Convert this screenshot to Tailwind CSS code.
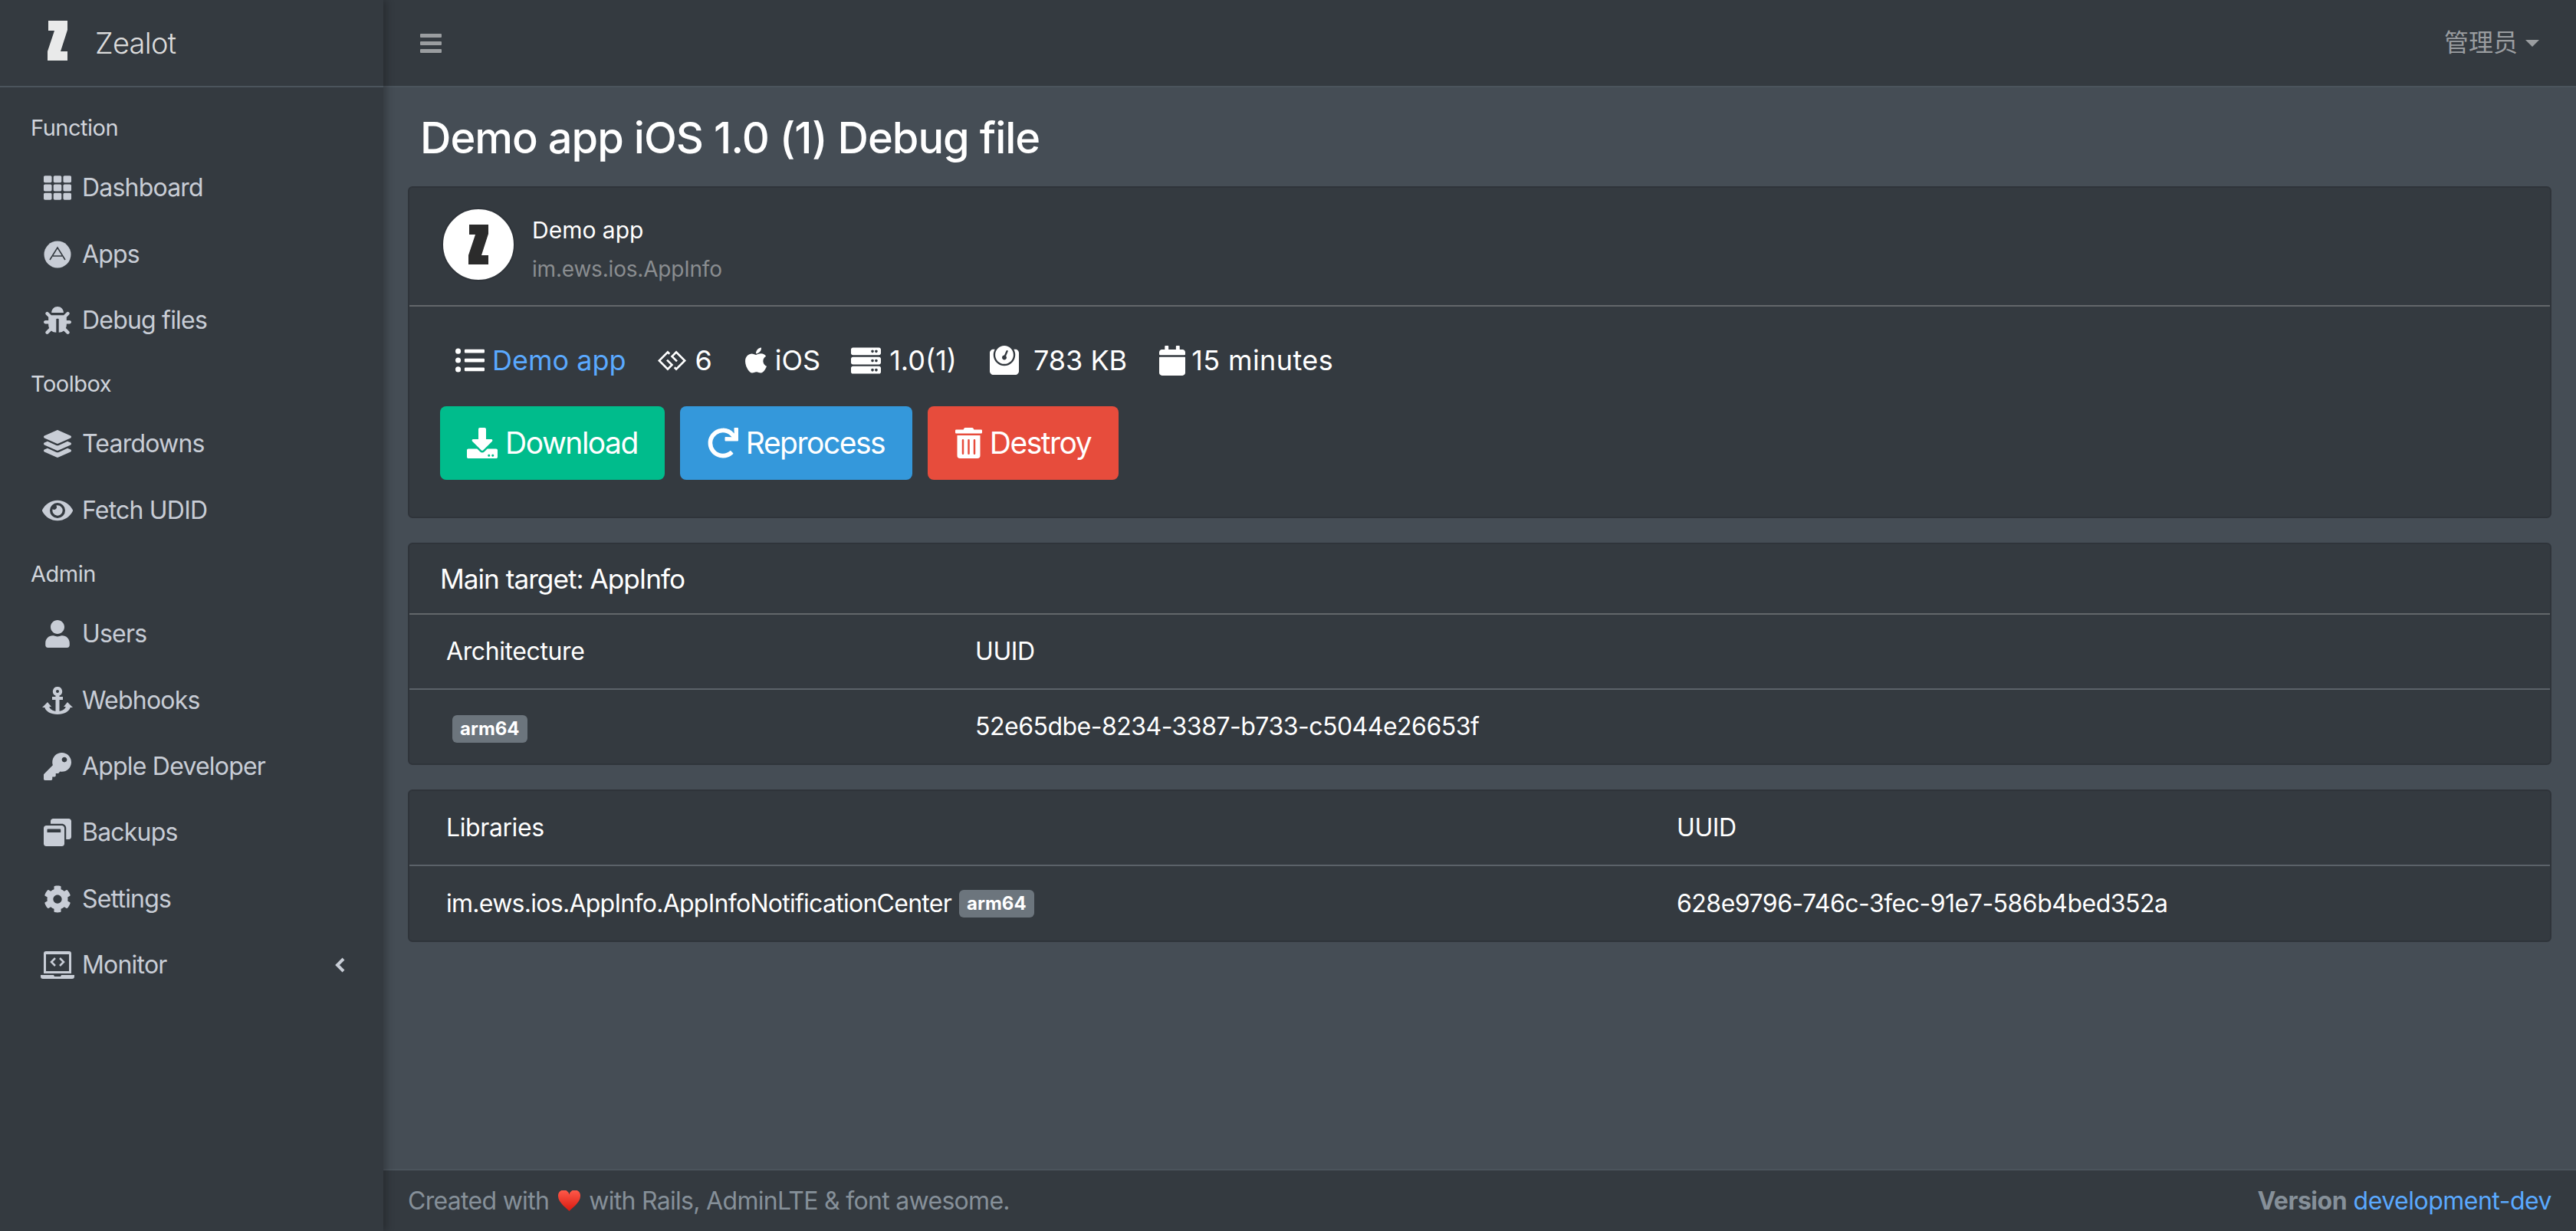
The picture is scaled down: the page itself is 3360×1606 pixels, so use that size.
<!DOCTYPE html>
<html lang="en">
<head>
    <meta charset="UTF-8">
    <title>Demo app iOS 1.0 (1) Debug file</title>
    <script src="https://cdn.jsdelivr.net/npm/@tailwindcss/browser@4"></script>
</head>
<body class="bg-[#454d55] font-['Inter','Noto_Sans_CJK_SC',sans-serif] text-[32px] tracking-[-0.6px] text-white h-[1606px] overflow-hidden flex">
    <!-- sidebar -->
    <aside class="w-[500px] shrink-0 bg-[#343a40] h-full flex flex-col text-[#c8cdd6] tracking-[-0.8px] shadow-[4px_0_10px_rgba(0,0,0,0.25)] z-10">
        <div class="h-[114px] shrink-0 border-b-2 border-[#4b545c] flex items-center pl-[62px] gap-[36px]">
            <svg class="w-[26px] h-[52px] -mt-[6px]" viewBox="0 0 26 52"><path fill="#e9eaea" d="M1 0h25v12l-9 28h9v12H0V40L9 13H1z"/></svg>
            <span class="text-[38px] tracking-[-0.7px] font-light text-[#dcdcdc] mt-[1px]">Zealot</span>
        </div>
        <nav class="flex flex-col pt-[13px]">
            <div class="h-[75px] pt-[5px] flex items-center pl-[40px] text-[29px] tracking-[-0.5px] text-[#d0d4db]">Function</div>
            <a class="h-[86.4px] flex items-center pl-[57px] gap-[14px]"><svg class="w-[36px] h-[36px] fill-current" viewBox="0 0 512 512"><path d="M149.333 56v80c0 13.255-10.745 24-24 24H24c-13.255 0-24-10.745-24-24V56c0-13.255 10.745-24 24-24h101.333c13.255 0 24 10.745 24 24zm181.334 240v-80c0-13.255-10.745-24-24-24H205.333c-13.255 0-24 10.745-24 24v80c0 13.255 10.745 24 24 24h101.333c13.255 0 24-10.745 24-24zm32-240v80c0 13.255 10.745 24 24 24H488c13.255 0 24-10.745 24-24V56c0-13.255-10.745-24-24-24H386.667c-13.255 0-24 10.745-24 24zm-32 80V56c0-13.255-10.745-24-24-24H205.333c-13.255 0-24 10.745-24 24v80c0 13.255 10.745 24 24 24h101.333c13.255 0 24-10.745 24-24zm-205.334 56H24c-13.255 0-24 10.745-24 24v80c0 13.255 10.745 24 24 24h101.333c13.255 0 24-10.745 24-24v-80c0-13.255-10.745-24-24-24zM0 376v80c0 13.255 10.745 24 24 24h101.333c13.255 0 24-10.745 24-24v-80c0-13.255-10.745-24-24-24H24c-13.255 0-24 10.745-24 24zm386.667-56H488c13.255 0 24-10.745 24-24v-80c0-13.255-10.745-24-24-24H386.667c-13.255 0-24 10.745-24 24v80c0 13.255 10.745 24 24 24zm0 160H488c13.255 0 24-10.745 24-24v-80c0-13.255-10.745-24-24-24H386.667c-13.255 0-24 10.745-24 24v80c0 13.255 10.745 24 24 24zM181.333 376v80c0 13.255 10.745 24 24 24h101.333c13.255 0 24-10.745 24-24v-80c0-13.255-10.745-24-24-24H205.333c-13.255 0-24 10.745-24 24z"/></svg>Dashboard</a>
            <a class="h-[86.4px] flex items-center pl-[57px] gap-[14px]"><svg class="w-[36px] h-[36px]" viewBox="0 0 36 36"><circle cx="18" cy="18" r="17.5" fill="currentColor"/><path d="M8 25 18 9l10 16M12 20h12" stroke="#343a40" stroke-width="1.6" fill="none"/></svg>Apps</a>
            <a class="h-[86.4px] flex items-center pl-[57px] gap-[14px]"><svg class="w-[36px] h-[36px] fill-current" viewBox="0 0 512 512"><path d="M511.988 288.9c-.478 17.43-15.217 31.1-32.653 31.1H424v16c0 21.864-4.882 42.584-13.6 61.145l60.228 60.228c12.496 12.497 12.496 32.758 0 45.255-12.498 12.497-32.759 12.496-45.256 0l-54.736-54.736C345.886 467.965 314.351 480 280 480V236c0-6.627-5.373-12-12-12h-24c-6.627 0-12 5.373-12 12v244c-34.351 0-65.886-12.035-90.636-32.108l-54.736 54.736c-12.498 12.497-32.759 12.496-45.256 0-12.496-12.497-12.496-32.758 0-45.255l60.228-60.228C92.882 378.584 88 357.864 88 336v-16H32.666C15.23 320 .491 306.33.013 288.9-.484 270.816 14.028 256 32 256h56v-58.745l-46.628-46.628c-12.496-12.497-12.496-32.758 0-45.255 12.498-12.497 32.758-12.497 45.256 0L141.255 160h229.489l54.627-54.627c12.498-12.497 32.758-12.497 45.256 0 12.496 12.497 12.496 32.758 0 45.255L424 197.255V256h56c17.972 0 32.484 14.816 31.988 32.9zM257 0c-61.856 0-112 50.144-112 112h224C369 50.144 318.856 0 257 0z"/></svg>Debug files</a>
            <div class="h-[75px] pt-[5px] flex items-center pl-[40px] text-[29px] tracking-[-0.5px] text-[#d0d4db]">Toolbox</div>
            <a class="h-[86.4px] flex items-center pl-[57px] gap-[14px]"><svg class="w-[36px] h-[36px] fill-current" viewBox="0 0 512 512"><path d="M12.41 148.020l232.940 105.670c6.800 3.090 14.490 3.090 21.290 0l232.940-105.670c16.550-7.510 16.550-32.520 0-40.030L266.650 2.310a25.607 25.607 0 0 0-21.290 0L12.410 107.980c-16.550 7.510-16.550 32.530 0 40.040zm487.180 88.280l-58.090-26.330-161.640 73.270c-7.560 3.430-15.590 5.170-23.860 5.170s-16.290-1.740-23.860-5.170L70.510 209.970l-58.100 26.330c-16.550 7.500-16.550 32.500 0 40l232.940 105.590c6.800 3.080 14.490 3.080 21.290 0L499.590 276.300c16.550-7.500 16.550-32.500 0-40zm0 127.800l-57.870-26.230-161.860 73.370c-7.560 3.430-15.590 5.170-23.860 5.170s-16.290-1.740-23.860-5.170L70.290 337.870 12.410 364.100c-16.550 7.500-16.550 32.500 0 40l232.940 105.590c6.800 3.080 14.490 3.080 21.290 0L499.590 404.100c16.550-7.500 16.550-32.500 0-40z"/></svg>Teardowns</a>
            <a class="h-[86.4px] flex items-center pl-[57px] gap-[14px]"><svg class="w-[40px] h-[36px] -mx-[2px] fill-current" viewBox="0 0 576 512"><path d="M572.520 241.400C518.290 135.590 410.930 64 288 64S57.680 135.640 3.480 241.410a32.350 32.350 0 0 0 0 29.190C57.710 376.410 165.070 448 288 448s230.320-71.640 284.520-177.410a32.350 32.350 0 0 0 0-29.190zM288 400a144 144 0 1 1 144-144 143.930 143.930 0 0 1-144 144zm0-240a95.310 95.310 0 0 0-25.310 3.790 47.850 47.850 0 0 1-66.900 66.900A95.780 95.780 0 1 0 288 160z"/></svg>Fetch UDID</a>
            <div class="h-[75px] pt-[5px] flex items-center pl-[40px] text-[29px] tracking-[-0.5px] text-[#d0d4db]">Admin</div>
            <a class="h-[86.4px] flex items-center pl-[57px] gap-[14px]"><svg class="w-[36px] h-[36px] fill-current" viewBox="0 0 512 512"><path d="M256 256c70.700 0 128-57.300 128-128S326.700 0 256 0 128 57.300 128 128s57.300 128 128 128zm89.600 32h-16.700c-22.200 10.200-46.900 16-72.900 16s-50.600-5.800-72.900-16h-16.700C92.200 288 32 348.200 32 422.400V464c0 26.500 21.500 48 48 48h352c26.500 0 48-21.500 48-48v-41.600c0-74.200-60.200-134.400-134.400-134.400z"/></svg>Users</a>
            <a class="h-[86.4px] flex items-center pl-[57px] gap-[14px]"><svg class="w-[40px] h-[36px] -mx-[2px] fill-current" viewBox="0 0 40 36"><path fill-rule="evenodd" d="M20 0a6 6 0 0 1 2.500 11.500V13H27v4h-4.500v14.800c4.300-.6 7.500-3 8.300-5.800H28l5-6 7 7h-3.300C35.500 32 28.500 36 20 36S4.500 32 3.300 27H0l7-7 5 6H9.200c.8 2.800 4 5.200 8.300 5.800V17H13v-4h4.500v-1.500A6 6 0 0 1 20 0zm0 4a2 2 0 1 0 0 4 2 2 0 0 0 0-4z"/></svg>Webhooks</a>
            <a class="h-[86.4px] flex items-center pl-[57px] gap-[14px]"><svg class="w-[36px] h-[36px] fill-current" viewBox="0 0 512 512"><path d="M512 176.001C512 273.203 433.202 352 336 352c-11.220 0-22.190-1.062-32.827-3.069l-24.012 27.014A23.999 23.999 0 0 1 261.223 384H224v40c0 13.255-10.745 24-24 24h-40v40c0 13.255-10.745 24-24 24H24c-13.255 0-24-10.745-24-24v-78.059c0-6.365 2.529-12.470 7.029-16.971l161.802-161.802C163.108 213.814 160 195.271 160 176 160 78.798 238.797.001 335.999 0 433.488-.001 512 78.511 512 176.001zM336 128c0 26.510 21.490 48 48 48s48-21.490 48-48-21.490-48-48-48-48 21.490-48 48z"/></svg>Apple Developer</a>
            <a class="h-[86.4px] flex items-center pl-[57px] gap-[14px]"><svg class="w-[36px] h-[36px] fill-current" viewBox="0 0 512 512"><path d="M512 48v288c0 26.500-21.500 48-48 48h-48V176c0-44.100-35.900-80-80-80H128V48c0-26.500 21.500-48 48-48h288c26.500 0 48 21.500 48 48zM384 176v288c0 26.500-21.500 48-48 48H48c-26.500 0-48-21.500-48-48V176c0-26.500 21.500-48 48-48h288c26.500 0 48 21.500 48 48zm-68 28c0-6.600-5.400-12-12-12H76c-6.600 0-12 5.400-12 12v52h252v-52z"/></svg>Backups</a>
            <a class="h-[86.4px] flex items-center pl-[57px] gap-[14px]"><svg class="w-[36px] h-[36px] fill-current" viewBox="0 0 512 512"><path d="M487.400 315.700l-42.600-24.600c4.300-23.200 4.300-47 0-70.200l42.600-24.600c4.900-2.800 7.100-8.600 5.500-14-11.100-35.600-30-67.800-54.700-94.600-3.800-4.100-10-5.100-14.800-2.300L380.800 110c-17.900-15.400-38.500-27.300-60.800-35.100V25.800c0-5.600-3.900-10.500-9.400-11.700-36.700-8.200-74.300-7.800-109.200 0-5.500 1.200-9.400 6.100-9.400 11.700V75c-22.200 7.900-42.800 19.800-60.800 35.100L88.700 85.500c-4.900-2.800-11-1.900-14.800 2.300-24.700 26.700-43.600 58.900-54.700 94.600-1.700 5.400.6 11.200 5.500 14L67.300 221c-4.300 23.200-4.300 47 0 70.200l-42.600 24.600c-4.900 2.800-7.100 8.600-5.500 14 11.100 35.600 30 67.800 54.700 94.600 3.800 4.100 10 5.100 14.800 2.300l42.600-24.600c17.900 15.400 38.500 27.300 60.800 35.100v49.200c0 5.600 3.900 10.500 9.400 11.700 36.700 8.200 74.300 7.800 109.200 0 5.500-1.200 9.400-6.100 9.400-11.700v-49.200c22.200-7.900 42.800-19.800 60.800-35.100l42.600 24.600c4.900 2.800 11 1.900 14.800-2.300 24.700-26.700 43.600-58.900 54.700-94.600 1.500-5.500-.7-11.300-5.600-14.100zM256 336c-44.100 0-80-35.900-80-80s35.900-80 80-80 80 35.900 80 80-35.900 80-80 80z"/></svg>Settings</a>
            <a class="h-[86.4px] flex items-center pl-[57px] gap-[14px] relative"><svg class="w-[44px] h-[36px] -mx-[4px] fill-current" viewBox="0 0 44 36"><path fill-rule="evenodd" d="M4 3a3 3 0 0 1 3-3h30a3 3 0 0 1 3 3v26H4zm3 1v22h30V4zM0 31h17l1 2h8l1-2h17v2a3 3 0 0 1-3 3H3a3 3 0 0 1-3-3z"/><path d="M19 9l-5 5 5 5M25 9l5 5-5 5" fill="none" stroke="currentColor" stroke-width="2.500"/></svg>Monitor<svg class="absolute left-[437px] top-[33px] w-[14px] h-[20px]" viewBox="0 0 14 20"><path d="M11 2 3 10l8 8" fill="none" stroke="currentColor" stroke-width="4"/></svg></a>
        </nav>
    </aside>

    <!-- main column -->
    <div class="flex-1 min-w-0 h-full flex flex-col">
        <header class="h-[114px] shrink-0 bg-[#343a40] border-b-2 border-[#4b545c] flex items-center justify-between pl-[48px] pr-[48px]">
            <svg class="w-[28px] h-[32px] fill-[#9a9da0]" viewBox="0 0 28 32"><path d="M1 4h26a1 1 0 0 1 1 1v3a1 1 0 0 1-1 1H1a1 1 0 0 1-1-1V5a1 1 0 0 1 1-1zM1 14h26a1 1 0 0 1 1 1v3a1 1 0 0 1-1 1H1a1 1 0 0 1-1-1v-3a1 1 0 0 1 1-1zM1 24h26a1 1 0 0 1 1 1v3a1 1 0 0 1-1 1H1a1 1 0 0 1-1-1v-3a1 1 0 0 1 1-1z"/></svg>
            <div class="flex items-center gap-[10px] text-[#9a9da0] tracking-normal"><span>管理员</span><span class="w-0 h-0 border-x-[9px] border-x-transparent border-t-[9px] border-t-[#9a9da0]"></span></div>
        </header>

        <main class="flex-1 min-h-0 px-[32px]">
            <h1 class="text-[56px] tracking-[-1px] leading-[64px] font-medium pl-[16px] pt-[34px] pb-[31px]">Demo app iOS 1.0 (1) Debug file</h1>

            <section class="bg-[#343a40] rounded-[6px] border-2 border-[#2f343a] mb-[32px] h-[433px]">
                <div class="h-[155px] border-b-2 border-[#63676b] flex items-center pl-[42px] gap-[22px]">
                    <div class="w-[96px] h-[96px] -mt-[5px] rounded-full bg-white border-2 border-[#2f343a] flex items-center justify-center">
                        <svg class="w-[26px] h-[52px]" viewBox="0 0 26 52"><path fill="#2b2b2b" d="M1 0h25v12l-9 28h9v12H0V40L9 13H1z"/></svg>
                    </div>
                    <div class="flex flex-col gap-[13px] mt-[7px] text-[30px] tracking-normal">
                        <span class="leading-[38px]">Demo app</span>
                        <span class="leading-[38px] text-[28px] tracking-[-0.2px] text-[#8a8d90]">im.ews.ios.AppInfo</span>
                    </div>
                </div>
                <div class="flex items-center h-[70px] mt-[35px] pl-[60px] text-[36px] tracking-normal">
                    <svg class="w-[38px] h-[38px] mr-[10px] fill-white" viewBox="0 0 512 512"><path d="M48 48a48 48 0 1 0 48 48 48 48 0 0 0-48-48zm0 160a48 48 0 1 0 48 48 48 48 0 0 0-48-48zm0 160a48 48 0 1 0 48 48 48 48 0 0 0-48-48zm448 16H176a16 16 0 0 0-16 16v32a16 16 0 0 0 16 16h320a16 16 0 0 0 16-16v-32a16 16 0 0 0-16-16zm0-320H176a16 16 0 0 0-16 16v32a16 16 0 0 0 16 16h320a16 16 0 0 0 16-16V80a16 16 0 0 0-16-16zm0 160H176a16 16 0 0 0-16 16v32a16 16 0 0 0 16 16h320a16 16 0 0 0 16-16v-32a16 16 0 0 0-16-16z"/></svg>
                    <span class="text-[#5aa9ff]">Demo app</span>
                    <svg class="w-[37px] h-[37px] ml-[41px] mr-[12px] fill-white" viewBox="0 0 512 512"><path d="M179.200 230.400l102.400 102.400-102.400 102.400L0 256 179.200 76.800l44.800 44.800-25.600 25.600-19.200-19.200-128 128 128 128 51.500-51.500-77.100-76.500 25.600-25.600zM332.800 76.800L230.400 179.200l102.400 102.400 25.600-25.600-77.100-76.500 51.500-51.500 128 128-128 128-19.200-19.200-25.600 25.600 44.800 44.800L512 256 332.800 76.800z"/></svg>
                    <span>6</span>
                    <svg class="w-[30px] h-[38px] ml-[42px] mr-[10px] fill-white" viewBox="0 0 384 512"><path d="M318.700 268.700c-.2-36.700 16.400-64.400 50-84.800-18.800-26.900-47.200-41.700-84.700-44.600-35.500-2.800-74.300 20.700-88.500 20.700-15 0-49.400-19.700-76.400-19.700C63.300 141.200 4 184.800 4 273.500q0 39.300 14.400 81.200c12.800 36.700 59 126.700 107.200 125.200 25.200-.6 43-17.900 75.800-17.900 31.800 0 48.300 17.900 76.400 17.900 48.600-.7 90.400-82.500 102.600-119.300-65.200-30.700-61.700-90-61.700-91.900zm-56.600-164.200c27.300-32.400 24.800-61.900 24-72.500-24.100 1.400-52 16.400-67.900 34.900-17.500 19.800-27.800 44.300-25.600 71.900 26.100 2 49.900-11.400 69.500-34.300z"/></svg>
                    <span>iOS</span>
                    <svg class="w-[39px] h-[39px] ml-[40px] mr-[11px] fill-white" viewBox="0 0 512 512"><path d="M480 160H32c-17.673 0-32-14.327-32-32V64c0-17.673 14.327-32 32-32h448c17.673 0 32 14.327 32 32v64c0 17.673-14.327 32-32 32zm-48-88c-13.255 0-24 10.745-24 24s10.745 24 24 24 24-10.745 24-24-10.745-24-24-24zm-64 0c-13.255 0-24 10.745-24 24s10.745 24 24 24 24-10.745 24-24-10.745-24-24-24zm112 248H32c-17.673 0-32-14.327-32-32v-64c0-17.673 14.327-32 32-32h448c17.673 0 32 14.327 32 32v64c0 17.673-14.327 32-32 32zm-48-88c-13.255 0-24 10.745-24 24s10.745 24 24 24 24-10.745 24-24-10.745-24-24-24zm-64 0c-13.255 0-24 10.745-24 24s10.745 24 24 24 24-10.745 24-24-10.745-24-24-24zm112 248H32c-17.673 0-32-14.327-32-32v-64c0-17.673 14.327-32 32-32h448c17.673 0 32 14.327 32 32v64c0 17.673-14.327 32-32 32zm-48-88c-13.255 0-24 10.745-24 24s10.745 24 24 24 24-10.745 24-24-10.745-24-24-24zm-64 0c-13.255 0-24 10.745-24 24s10.745 24 24 24 24-10.745 24-24-10.745-24-24-24z"/></svg>
                    <span>1.0(1)</span>
                    <svg class="w-[38px] h-[38px] ml-[43px] mr-[19px] fill-white" viewBox="0 0 512 512"><path d="M448 64h-25.980C438.440 92.280 448 125.010 448 160c0 105.870-86.130 192-192 192S64 265.870 64 160c0-34.990 9.560-67.720 25.980-96H64C28.710 64 0 92.710 0 128v320c0 35.290 28.710 64 64 64h384c35.290 0 64-28.710 64-64V128c0-35.290-28.710-64-64-64zM256 320c88.370 0 160-71.630 160-160S344.370 0 256 0 96 71.630 96 160s71.630 160 160 160zm-.3-151.940l33.580-78.360c3.500-8.170 12.940-11.950 21.030-8.410 8.120 3.480 11.880 12.890 8.410 21l-33.670 78.550C291.730 188 296 197.450 296 208c0 22.090-17.910 40-40 40s-40-17.910-40-40c0-21.980 17.760-39.770 39.700-39.940z"/></svg>
                    <span>783 KB</span>
                    <svg class="w-[34px] h-[39px] ml-[42px] mr-[8px] fill-white" viewBox="0 0 448 512"><path d="M12 192h424c6.600 0 12 5.400 12 12v260c0 26.500-21.500 48-48 48H48c-26.500 0-48-21.500-48-48V204c0-6.600 5.400-12 12-12zm436-44v-36c0-26.500-21.500-48-48-48h-48V12c0-6.600-5.400-12-12-12h-40c-6.600 0-12 5.400-12 12v52H160V12c0-6.600-5.400-12-12-12h-40c-6.600 0-12 5.400-12 12v52H48C21.500 64 0 85.500 0 112v36c0 6.600 5.400 12 12 12h424c6.600 0 12-5.400 12-12z"/></svg>
                    <span class="tracking-[0.4px]">15 minutes</span>
                </div>
                <div class="flex gap-[20px] mt-[25px] pl-[40px] text-[39px] tracking-[-1.5px]">
                    <button class="h-[96px] w-[293px] bg-[#00bc8c] rounded-[8px] flex items-center justify-center gap-[10px]"><svg class="w-[40px] h-[40px] fill-white" viewBox="0 0 512 512"><path d="M216 0h80c13.300 0 24 10.700 24 24v168h87.700c17.800 0 26.700 21.500 14.100 34.100L269.700 378.300c-7.500 7.500-19.800 7.500-27.300 0L90.100 226.100c-12.600-12.600-3.700-34.100 14.100-34.100H192V24c0-13.300 10.700-24 24-24zm296 376v112c0 13.300-10.700 24-24 24H24c-13.300 0-24-10.700-24-24V376c0-13.300 10.700-24 24-24h146.700l49 49c20.100 20.100 52.500 20.100 72.600 0l49-49H488c13.300 0 24 10.700 24 24zm-124 88c0-11-9-20-20-20s-20 9-20 20 9 20 20 20 20-9 20-20zm64 0c0-11-9-20-20-20s-20 9-20 20 9 20 20 20 20-9 20-20z"/></svg>Download</button>
                    <button class="h-[96px] w-[303px] bg-[#3498db] rounded-[8px] flex items-center justify-center gap-[10px]"><svg class="w-[40px] h-[40px] fill-white" viewBox="0 0 512 512"><path d="M500.330 0h-47.410a12 12 0 0 0-12 12.570l4 82.760A247.420 247.420 0 0 0 256 8C119.340 8 7.900 119.530 8 256.190 8.100 393.070 119.100 504 256 504a247.100 247.100 0 0 0 166.180-63.910 12 12 0 0 0 .48-17.430l-34-34a12 12 0 0 0-16.380-.55A176 176 0 1 1 402.100 157.800l-101.530-4.870a12 12 0 0 0-12.570 12v47.410a12 12 0 0 0 12 12h200.330a12 12 0 0 0 12-12V12a12 12 0 0 0-12-12z"/></svg>Reprocess</button>
                    <button class="h-[96px] w-[249px] bg-[#e74c3c] rounded-[8px] flex items-center justify-center gap-[10px]"><svg class="w-[35px] h-[40px] fill-white" viewBox="0 0 448 512"><path d="M32 464a48 48 0 0 0 48 48h288a48 48 0 0 0 48-48V128H32zm272-256a16 16 0 0 1 32 0v224a16 16 0 0 1-32 0zm-96 0a16 16 0 0 1 32 0v224a16 16 0 0 1-32 0zm-96 0a16 16 0 0 1 32 0v224a16 16 0 0 1-32 0zM432 32H312l-9.400-18.700A24 24 0 0 0 281.100 0H166.800a23.720 23.720 0 0 0-21.400 13.300L136 32H16A16 16 0 0 0 0 48v32a16 16 0 0 0 16 16h416a16 16 0 0 0 16-16V48a16 16 0 0 0-16-16z"/></svg>Destroy</button>
                </div>
            </section>

            <section class="bg-[#343a40] rounded-[6px] border-2 border-[#2f343a] mb-[32px] h-[290px]">
                <div class="h-[92px] border-b-2 border-[#63676b] flex items-center pl-[40px] text-[35.2px] tracking-[-1px]">Main target: AppInfo</div>
                <div class="h-[98px] border-b-2 border-[#5b6269] grid grid-cols-[690px_1fr] items-center pl-[48px] tracking-[-0.4px]"><span>Architecture</span><span>UUID</span></div>
                <div class="h-[96px] grid grid-cols-[690px_1fr] items-center pl-[48px] tracking-[-0.5px]">
                    <span><span class="inline-block ml-[8px] bg-[#6c757d] rounded-[6px] px-[10px] h-[36px] leading-[36px] text-[24px] tracking-normal font-bold">arm64</span></span>
                    <span>52e65dbe-8234-3387-b733-c5044e26653f</span>
                </div>
            </section>

            <section class="bg-[#343a40] rounded-[6px] border-2 border-[#2f343a] h-[199px]">
                <div class="h-[98px] border-b-2 border-[#5b6269] grid grid-cols-[1605px_1fr] items-center pl-[48px] tracking-[-0.4px]"><span>Libraries</span><span>UUID</span></div>
                <div class="h-[97px] grid grid-cols-[1605px_1fr] items-center pl-[48px] tracking-[-0.5px]">
                    <span class="flex items-center gap-[10px] tracking-[-0.73px]">im.ews.ios.AppInfo.AppInfoNotificationCenter<span class="inline-block bg-[#6c757d] rounded-[6px] px-[10px] h-[36px] leading-[36px] text-[24px] tracking-normal font-bold">arm64</span></span>
                    <span>628e9796-746c-3fec-91e7-586b4bed352a</span>
                </div>
            </section>
        </main>

        <footer class="h-[81px] shrink-0 bg-[#343a40] border-t-2 border-[#4b545c] flex items-center justify-between px-[32px] text-[#869099] tracking-[-0.7px]">
            <span class="flex items-center">Created with<svg class="w-[31px] h-[27px] ml-[11px] mr-[10px]" viewBox="0 0 34 30"><defs><linearGradient id="heart" x1="0" y1="0" x2="0" y2="1"><stop offset="0" stop-color="#ff5a4a"/><stop offset="1" stop-color="#d81a10"/></linearGradient></defs><path fill="url(#heart)" d="M17 30C8 22 1 16 1 9a8 8 0 0 1 16-3 8 8 0 0 1 16 3c0 7-7 13-16 21z"/></svg>with Rails, AdminLTE &amp; font awesome.</span>
            <span class="tracking-[-0.5px]"><b class="font-bold">Version</b> <a class="text-[#5aa9ff]">development-dev</a></span>
        </footer>
    </div>
</body>
</html>
